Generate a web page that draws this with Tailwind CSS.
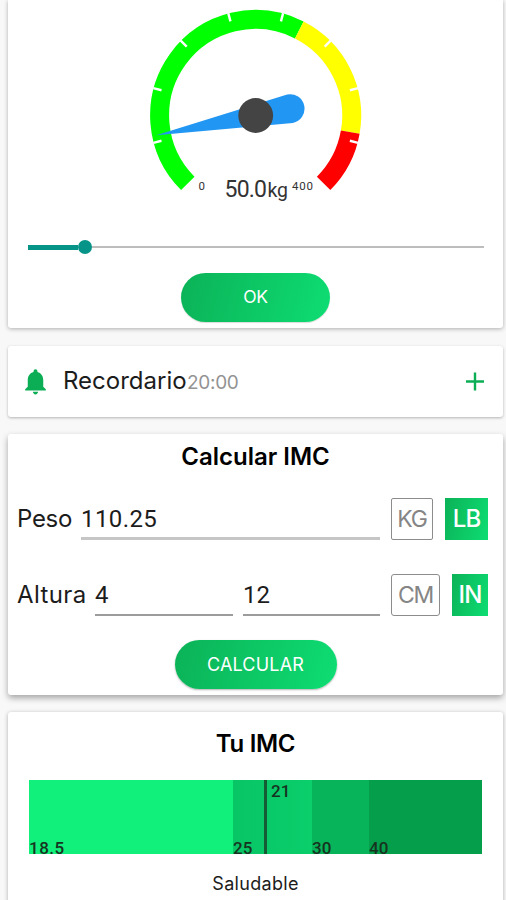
<!DOCTYPE html>
<html lang="es">
  <head>
    <meta charset="UTF-8" />
    <meta name="viewport" content="width=device-width, initial-scale=1.0" />
    <title>Calcular IMC</title>
    <script src="https://cdn.jsdelivr.net/npm/@tailwindcss/browser@4"></script>
  </head>
  <body
    class="bg-[#f8f8f8] h-[900px] overflow-hidden pl-[8px] pr-[3px] font-[Inter,sans-serif] text-[#1c1c1c] flex flex-col"
  >
    <!-- Weight gauge -->
    <section
      class="bg-white h-[328px] shrink-0 rounded-b-[3px] shadow-[0_1px_4px_rgba(0,0,0,0.3)] flex flex-col items-center"
    >
      <svg class="w-[240px] h-[210px] shrink-0" viewBox="135.5 0 240 210">
        <g transform="translate(255.2 115.5)">
          <g fill="none" stroke-width="19">
            <path d="M-67.9 67.9A96 96 0 0 1 43.58 -85.54" stroke="#00ff00" />
            <path d="M43.58 -85.54A96 96 0 0 1 94.54 16.67" stroke="#ffff00" />
            <path d="M94.54 16.67A96 96 0 0 1 67.9 67.9" stroke="#ff0000" />
          </g>
          <g stroke="#fff" stroke-width="2.4">
            <path d="M0 -106V-97.5" transform="rotate(-105)" />
            <path d="M0 -106V-97.5" transform="rotate(-75)" />
            <path d="M0 -106V-97.5" transform="rotate(-45)" />
            <path d="M0 -106V-97.5" transform="rotate(-15)" />
            <path d="M0 -106V-97.5" transform="rotate(15)" />
            <path d="M0 -106V-97.5" transform="rotate(45)" />
            <path d="M0 -106V-97.5" transform="rotate(75)" />
            <path d="M0 -106V-97.5" transform="rotate(105)" />
          </g>
          <path
            d="M-101.5 0L35 -14.5A14.5 14.5 0 0 1 35 14.5Z"
            fill="#2196f3"
            transform="rotate(-11.25)"
          />
          <circle r="17.4" fill="#444" />
        </g>
        <g font-family="Roboto, sans-serif" fill="#333">
          <text x="198" y="190" font-size="11.5">0</text>
          <text x="224" y="197" font-size="23" textLength="42.5">50.0</text>
          <text x="267" y="197" font-size="19.5" textLength="20.5">kg</text>
          <text x="291.5" y="190" font-size="11.5" textLength="21">400</text>
        </g>
      </svg>
      <div class="w-[456px] h-4 mt-[29px] flex items-center shrink-0">
        <div class="w-[50px] h-[5px] bg-[#069488]"></div>
        <div class="size-[14px] rounded-full bg-[#069488]"></div>
        <div class="flex-1 h-[2px] bg-[#bdbdbd]"></div>
      </div>
      <button
        class="mt-[18px] w-[149px] h-[49px] shrink-0 rounded-full bg-linear-[105deg] from-[#0bb257] to-[#0edd73] text-white text-[17.5px] tracking-[-0.3px] shadow-[0_1px_1px_rgba(0,0,0,0.15)]"
      >
        OK
      </button>
    </section>

    <!-- Reminder -->
    <section
      class="bg-white mt-[18px] h-[71px] shrink-0 rounded-[3px] shadow-[0_1px_3px_rgba(0,0,0,0.28)] flex items-center pl-[12px] pr-[12px]"
    >
      <svg class="w-[31px] h-[31px]" viewBox="0 0 24 24" fill="#0bae55">
        <path
          d="M12 22c1.1 0 2-.9 2-2h-4c0 1.1.9 2 2 2zm6-6v-5c0-3.07-1.64-5.64-4.5-6.32V4c0-.83-.67-1.5-1.5-1.5s-1.5.67-1.5 1.5v.68C7.63 5.36 6 7.92 6 11v5l-2 2v1h16v-1l-2-2z"
        />
      </svg>
      <div class="ml-[12px] w-[200px] pb-[1px] flex items-baseline">
        <span class="w-[124px] text-[24px]">Recordario</span>
        <span class="text-[19px] tracking-[-0.3px] text-[#939393]">20:00</span>
      </div>
      <svg class="w-[32px] h-[32px] ml-auto" viewBox="0 0 32 32">
        <path d="M16 6.500V24.500M7 15.500H25" stroke="#0bae55" stroke-width="2.4" />
      </svg>
    </section>

    <!-- BMI form -->
    <section
      class="bg-white mt-[17px] h-[261px] shrink-0 rounded-[3px] shadow-[0_3px_6px_rgba(0,0,0,0.34)] flex flex-col items-center"
    >
      <h2 class="mt-[7px] h-8 leading-8 text-[24px] font-semibold text-black">
        Calcular IMC
      </h2>
      <div class="w-full h-[42px] mt-[25px] pl-[9px] pr-[15px] flex items-center">
        <span class="w-[64px] text-[24px] tracking-[-0.3px]">Peso</span>
        <div class="w-[299px] h-[42px] border-b-[3px] border-[#c6c6c6] leading-[43px] font-[Roboto,sans-serif] text-[24px] tracking-[0.4px]">110.25</div>
        <div class="ml-[11px] w-[42px] h-[42px] rounded-[2px] border border-[#8c8c8c] text-[#858585] flex items-center justify-center text-[23px] tracking-[-1.2px]">KG</div>
        <div class="ml-auto w-[43px] h-[42px] bg-linear-[105deg] from-[#0bb257] to-[#0edd73] text-white flex items-center justify-center text-[24px] font-medium tracking-[-0.8px]">LB</div>
      </div>
      <div class="w-full h-[42px] mt-[34px] pl-[9px] pr-[15px] flex items-center">
        <span class="w-[78px] text-[24px] tracking-[0.4px]">Altura</span>
        <div class="w-[138px] h-[42px] border-b-2 border-[#9c9c9c] leading-[43px] font-[Roboto,sans-serif] text-[24px]">4</div>
        <div class="ml-[10px] w-[137px] h-[42px] border-b-2 border-[#9c9c9c] leading-[43px] font-[Roboto,sans-serif] text-[24px]">12</div>
        <div class="ml-[11px] w-[49px] h-[42px] rounded-[3px] border border-[#8c8c8c] text-[#858585] flex items-center justify-center text-[23px] tracking-[-1.2px]">CM</div>
        <div class="ml-auto w-[36px] h-[42px] bg-linear-[105deg] from-[#0bb257] to-[#0edd73] text-white flex items-center justify-center text-[24px] font-medium tracking-[-0.8px]">IN</div>
      </div>
      <button
        class="mt-[24px] pb-[1px] w-[162px] h-[49px] shrink-0 rounded-full bg-linear-[105deg] from-[#0bb257] to-[#0edd73] text-white text-[18px] tracking-[0.2px] shadow-[0_1px_2px_rgba(0,0,0,0.3)]"
      >
        CALCULAR
      </button>
    </section>

    <!-- BMI result -->
    <section
      class="bg-white mt-[17px] h-[220px] shrink-0 rounded-t-[3px] shadow-[0_1px_4px_rgba(0,0,0,0.3)] flex flex-col items-center"
    >
      <h2 class="mt-[16px] h-8 leading-8 text-[24px] font-semibold text-black tracking-[-0.3px]">
        Tu IMC
      </h2>
      <div class="relative w-[453px] h-[74px] mt-[20px] flex items-end font-[Roboto,sans-serif] text-[17px] leading-[12px] font-medium text-[#17331f]">
        <div class="w-[204px] h-full bg-[#11f07b] flex items-end tracking-[0.5px]">18.5</div>
        <div class="w-[79px] h-full bg-linear-to-r from-[#08c565] to-[#0acf6b] flex items-end">25</div>
        <div class="w-[57px] h-full bg-[#08b459] flex items-end">30</div>
        <div class="flex-1 h-full bg-[#059f4c] flex items-end">40</div>
        <div class="absolute left-[235px] top-0 w-[3px] h-full bg-[#155c35]"></div>
        <span class="absolute left-[242px] top-[5px]">21</span>
      </div>
      <p class="mt-[18px] text-[18px] leading-6 tracking-[0.3px]">Saludable</p>
    </section>
  </body>
</html>
